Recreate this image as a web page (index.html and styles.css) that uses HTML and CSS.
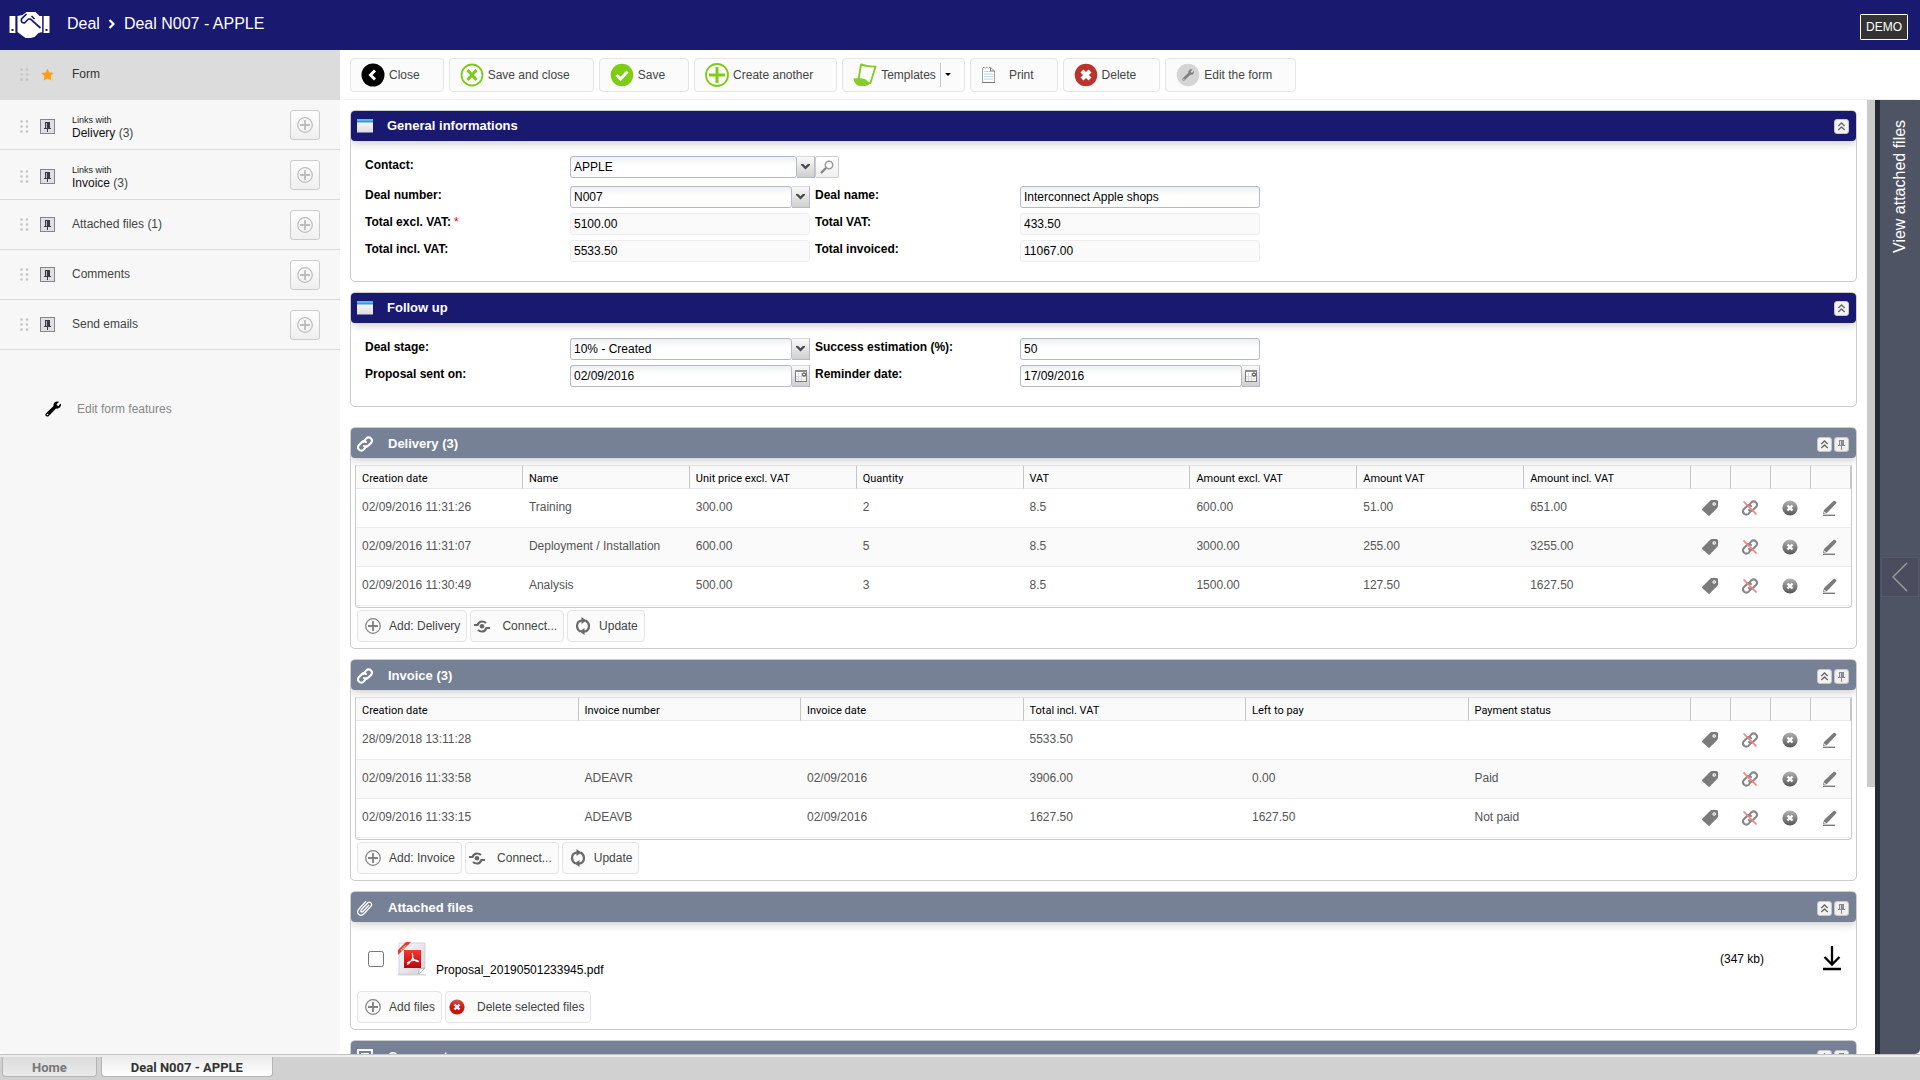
FILE: index.html
```html
<!DOCTYPE html>
<html lang="en">
<head>
<meta charset="utf-8">
<title>Deal N007 - APPLE</title>
<link rel="stylesheet" href="styles.css">
</head>
<body>
<svg class="sprite" aria-hidden="true">
  <defs>
    <linearGradient id="g-grey" x1="0" y1="0" x2="0" y2="1"><stop offset="0" stop-color="#b4b4b4"/><stop offset="1" stop-color="#555"/></linearGradient>
    <linearGradient id="g-red" x1="0" y1="0" x2="0" y2="1"><stop offset="0" stop-color="#d4524c"/><stop offset=".5" stop-color="#cf1a12"/><stop offset="1" stop-color="#c80d06"/></linearGradient>
    <linearGradient id="g-win" x1="0" y1="0" x2="0" y2="1"><stop offset="0" stop-color="#fff"/><stop offset="1" stop-color="#dcdcdc"/></linearGradient>
    <linearGradient id="g-pdf" x1="0" y1="0" x2="0" y2="1"><stop offset="0" stop-color="#f5392b"/><stop offset="1" stop-color="#bd0011"/></linearGradient>
    <linearGradient id="g-page" x1="0" y1="0" x2="1" y2="1"><stop offset="0" stop-color="#fafafc"/><stop offset="1" stop-color="#d2d3dc"/></linearGradient>
  </defs>
  <symbol id="i-grip" viewBox="0 0 9 13"><g fill="#c4c4c4"><circle cx="1.500" cy="1.500" r="1.300"/><circle cx="7" cy="1.500" r="1.300"/><circle cx="1.500" cy="6.500" r="1.300"/><circle cx="7" cy="6.500" r="1.300"/><circle cx="1.500" cy="11.500" r="1.300"/><circle cx="7" cy="11.500" r="1.300"/></g></symbol>
  <symbol id="i-pinbox" viewBox="0 0 15 15"><rect x=".5" y=".5" width="14" height="14" fill="#dfe0e2" stroke="#85868b"/><path d="M5 3h5v6h1v1H8v3H7v-3H4V9h1z" fill="#393a44"/><path d="M6 4h1v5H6z" fill="#b9bac0"/></symbol>
  <symbol id="i-plus" viewBox="0 0 16 16"><circle cx="8" cy="8" r="7.300" fill="none" stroke="currentColor" stroke-width="1.200"/><path d="M8 3v10M3 8h10" stroke="currentColor" stroke-width="1.800"/></symbol>
  <symbol id="i-window" viewBox="0 0 16 13"><rect width="16" height="13" fill="url(#g-win)"/><rect width="16" height="3" fill="#2e9be0"/><path d="M0 .5h16" stroke="#86cdf5"/></symbol>
  <symbol id="i-chain" viewBox="0 0 16 16"><g fill="none" stroke="currentColor" stroke-width="2.100" stroke-linecap="round"><path d="M6.300 6.200l3-3.800a3.200 3.200 0 0 1 4.700 0a3.200 3.200 0 0 1 0 4.500l-2.800 2.900a3.200 3.200 0 0 1-4.200.2"/><path d="M9.700 9.800l-3 3.800a3.200 3.200 0 0 1-4.700 0a3.200 3.200 0 0 1 0-4.500l2.800-2.900a3.200 3.200 0 0 1 4.200-.2"/></g></symbol>
  <symbol id="i-up" viewBox="0 0 15 15"><rect x=".5" y=".5" width="14" height="14" rx="2.500" fill="#f4f4f4" stroke="#c9c5c5"/><path d="M4.300 7l3.200-3 3.200 3M4.300 11l3.200-3 3.200 3" fill="none" stroke="#666" stroke-width="1.300"/></symbol>
  <symbol id="i-pinned" viewBox="0 0 15 15"><rect x=".5" y=".5" width="14" height="14" rx="2.500" fill="#f0f0f0" stroke="#c9c5c5"/><path d="M5 3h5v5h1v1H8v4H7V9H4V8h1z" fill="#8b8b8b"/><path d="M6 4h1v4H6z" fill="#ddd"/></symbol>
  <symbol id="i-tag" viewBox="0 0 16 16"><path d="M.3 8.700L8.200.7Q8.800 0 10 0h4.500Q16 0 16 1.500V6q0 1.200-.8 2L8 15.300q-1 1-2 0L.4 10.200q-.7-.7-.1-1.500z" fill="#7b7b7b"/><circle cx="12.200" cy="4" r="1.800" fill="#fff"/><circle cx="12.200" cy="4" r=".8" fill="#999"/></symbol>
  <symbol id="i-unlink" viewBox="0 0 16 16"><g color="#878787"><use href="#i-chain"/></g><path d="M1.500 1.500l13 13" stroke="#ff7c7c" stroke-width="1.700"/></symbol>
  <symbol id="i-cross" viewBox="0 0 16 16"><circle cx="8" cy="8" r="7.600"/><path d="M5.500 5.500l5 5M10.500 5.500l-5 5" stroke="#fff" stroke-width="2.400"/></symbol>
  <symbol id="i-pencil" viewBox="0 0 16 16"><path d="M2 10L11.500 1q.8-.7 1.600 0l1 1q.8.800 0 1.600L5 13l-4 1z" fill="#7b7b7b"/><path d="M2.300 11.500l1.600 1.200-1.700.5z" fill="#fff"/><path d="M1 15.300h12" stroke="#7b7b7b" stroke-width="1.400"/></symbol>
  <symbol id="i-connect" viewBox="0 0 16 16"><g fill="none" stroke="#666" stroke-width="2.200"><path d="M0 7h3.500Q5 3.500 8 3.500q2.500 0 4 1.500"/><path d="M16 10h-3.500Q11 13.500 8 13.500q-2.500 0-4-1.500"/></g><circle cx="8" cy="8.300" r="2.300" fill="#666"/></symbol>
  <symbol id="i-refresh" viewBox="0 0 16 18"><g fill="none" stroke="#6a6a6a" stroke-width="2.200"><path d="M5.500 14.500Q2 12.500 2 9Q2 3.800 7.500 3.300"/><path d="M10.500 3.500Q14 5.500 14 9Q14 14.200 8.500 14.700"/></g><path d="M6.500 0l5 3.500-5 3.500zM9.500 18l-5-3.500 5-3.500z" fill="#6a6a6a"/></symbol>
  <symbol id="i-wrench" viewBox="0 0 16 16"><path d="M14.200.8L11.600 3.300l.4 1.300 1.300.4L15.800 2.500Q16.500 5 14.800 6.500T11 7.500L4 14.700Q2.500 16.300 1 15T1.300 12L8.600 5Q8 3.200 9.500 1.500T14.200.8z" fill="currentColor"/><circle cx="2.500" cy="13.500" r=".8" fill="#fff"/></symbol>
  <symbol id="i-chevron" viewBox="0 0 9 6"><path d="M0 0h2.200l2.300 2.300L6.800 0H9v1L4.500 5.600 0 1z" fill="#4a4a4a"/></symbol>
  <symbol id="i-calendar" viewBox="0 0 12 12"><rect x=".5" y=".5" width="11" height="11" fill="#fff" stroke="#7c7c7c"/><path d="M0 1h12" stroke="#8d8d8d" stroke-width="2"/><path d="M3.500 3v8M6.500 3v8M1 6.500h10M1 9h10" stroke="#d8d8d8"/><circle cx="9" cy="4.500" r="1.600" fill="#fff" stroke="#222"/></symbol>
</svg>

<header class="topbar">
  <svg class="logo" viewBox="0 0 40 26"><path d="M0 4h6v17H0zM34 4h6v17h-6z" fill="#fff"/><path d="M8 4l5-1 4-3h9l4 4h3v16l-4 1-4 4-4 1-5 0-8-6H8z" fill="#fff"/><path d="M17 2l-5 5q-1 4 3 4l4-4h2l10 9M25 7l-3-3" fill="none" stroke="#191970" stroke-width="1.700"/><path d="M6.700 4v16M33.300 4v16" stroke="#191970"/><path d="M2 17h2v2H2zM36 17h2v2h-2z" fill="#191970"/></svg>
  <nav class="crumbs" aria-label="Breadcrumb"><a href="#">Deal</a><svg class="crumb-sep" viewBox="0 0 8 10"><path d="M1.500 1l4 4-4 4" fill="none" stroke="#fff" stroke-width="2.200"/></svg><a href="#">Deal N007 - APPLE</a></nav>
  <span class="demo">DEMO</span>
</header>

<div class="workspace">
  <aside class="sidebar">
    <ul class="features">
      <li class="feature feature-active"><svg class="grip"><use href="#i-grip"/></svg><svg class="mark" viewBox="0 0 15 15"><path d="M7.500 1.500l1.800 4 4.500.5-3.300 3 .9 4.500-3.900-2.200-3.900 2.200.9-4.500L1.200 6l4.500-.5z" fill="#ff9c12"/></svg><a class="feature-link" href="#">Form</a></li>
      <li class="feature feature-linked"><svg class="grip"><use href="#i-grip"/></svg><svg class="mark"><use href="#i-pinbox"/></svg><a class="feature-link" href="#"><small>Links with</small><b>Delivery</b> (3)</a><button class="add" aria-label="Add delivery"><svg><use href="#i-plus"/></svg></button></li>
      <li class="feature feature-linked"><svg class="grip"><use href="#i-grip"/></svg><svg class="mark"><use href="#i-pinbox"/></svg><a class="feature-link" href="#"><small>Links with</small><b>Invoice</b> (3)</a><button class="add" aria-label="Add invoice"><svg><use href="#i-plus"/></svg></button></li>
      <li class="feature"><svg class="grip"><use href="#i-grip"/></svg><svg class="mark"><use href="#i-pinbox"/></svg><a class="feature-link" href="#">Attached files (1)</a><button class="add" aria-label="Add file"><svg><use href="#i-plus"/></svg></button></li>
      <li class="feature"><svg class="grip"><use href="#i-grip"/></svg><svg class="mark"><use href="#i-pinbox"/></svg><a class="feature-link" href="#">Comments</a><button class="add" aria-label="Add comment"><svg><use href="#i-plus"/></svg></button></li>
      <li class="feature"><svg class="grip"><use href="#i-grip"/></svg><svg class="mark"><use href="#i-pinbox"/></svg><a class="feature-link" href="#">Send emails</a><button class="add" aria-label="Send an email"><svg><use href="#i-plus"/></svg></button></li>
    </ul>
    <a class="edit-features" href="#"><svg><use href="#i-wrench"/></svg>Edit form features</a>
  </aside>

  <main class="main">
    <div class="toolbar">
      <button class="tool"><svg viewBox="0 0 24 24"><circle cx="12" cy="12" r="11.500" fill="#000"/><path d="M14 7.500L9.500 12l4.500 4.500" fill="none" stroke="#fff" stroke-width="3"/></svg>Close</button>
      <button class="tool"><svg viewBox="0 0 24 24"><circle cx="12" cy="12" r="10.500" fill="#fff" stroke="#7ccb17" stroke-width="1.800"/><path d="M7.500 7l9 10M16.500 7l-9 10" stroke="#7ccb17" stroke-width="3"/></svg>Save and close</button>
      <button class="tool"><svg viewBox="0 0 24 24"><circle cx="12" cy="12" r="11.300" fill="#7dce13"/><path d="M6.500 12l4 4L17.500 8.500" fill="none" stroke="#fff" stroke-width="3"/></svg>Save</button>
      <button class="tool"><svg viewBox="0 0 24 24"><circle cx="12" cy="12" r="11" fill="#fff" stroke="#7dce13" stroke-width="1.800"/><path d="M12 4v16M4 12h16" stroke="#7dce13" stroke-width="3"/></svg>Create another</button>
      <button class="tool tool-menu"><svg viewBox="0 0 24 24"><path d="M8 1.500q7 2.500 14.500 2L17.500 20q-3 .5-5-2.500-3-1-7-1z" fill="#fff" stroke="#86cc28" stroke-width="1.900" stroke-linejoin="round"/><path d="M.5 15.500q6.500-.5 11 .5 2 3 5 4.500-1 2.500-5 2.500H6Q1 21 .5 15.500z" fill="#86cc28"/></svg>Templates<span class="caret"></span></button>
      <button class="tool"><svg viewBox="0 0 24 24"><path d="M1.500 5.500l1.500-1.500 1.500 1.500L6 4l1.500 1.500L9 4l4.500 4v11.500h-12z" fill="#fdfdfd" stroke="#a3a3a3"/><path d="M3 8.500h7M3 11h9M3 13.500h9M3 16h9" stroke="#bfd7e6"/><path d="M9.500 4.500v3.500h4M1 19.500h13" fill="none" stroke="#777"/></svg>Print</button>
      <button class="tool"><svg viewBox="0 0 24 24"><circle cx="12" cy="12" r="11.300" fill="#bb332c"/><path d="M8 8l8 8M16 8l-8 8" stroke="#fff" stroke-width="4.200"/></svg>Delete</button>
      <button class="tool"><svg viewBox="0 0 24 24"><circle cx="12" cy="12" r="11.300" fill="#d5d5d5"/><svg x="6" y="6" width="12" height="12" color="#808080"><use href="#i-wrench"/></svg></svg>Edit the form</button>
    </div>

    <div class="body">
      <div class="scroll">
        <section class="panel">
          <h2 class="panel-head"><svg class="panel-icon"><use href="#i-window"/></svg>General informations<span class="panel-tools"><button aria-label="Collapse"><svg><use href="#i-up"/></svg></button></span></h2>
          <div class="form">
            <label for="contact">Contact:</label>
            <div class="combo combo-wide"><select id="contact"><option>APPLE</option></select><span class="trigger"><svg class="chev"><use href="#i-chevron"/></svg></span><button class="lookup" aria-label="Search contact"><svg viewBox="0 0 14 14"><circle cx="9" cy="5" r="3.700" fill="#fff" stroke="#999" stroke-width="1.500"/><path d="M6 8l-5 5" stroke="#888" stroke-width="2.400"/></svg></button></div>
            <label class="row-start" for="number">Deal number:</label>
            <div class="combo"><select id="number"><option>N007</option></select><span class="trigger"><svg class="chev"><use href="#i-chevron"/></svg></span></div>
            <label for="name">Deal name:</label>
            <input class="field" id="name" value="Interconnect Apple shops">
            <label class="row-start" for="excl">Total excl. VAT:<span class="required">*</span></label>
            <input class="field" id="excl" value="5100.00" readonly>
            <label for="vat">Total VAT:</label>
            <input class="field" id="vat" value="433.50" readonly>
            <label class="row-start" for="incl">Total incl. VAT:</label>
            <input class="field" id="incl" value="5533.50" readonly>
            <label for="invoiced">Total invoiced:</label>
            <input class="field" id="invoiced" value="11067.00" readonly>
          </div>
        </section>

        <section class="panel panel-last-form">
          <h2 class="panel-head"><svg class="panel-icon"><use href="#i-window"/></svg>Follow up<span class="panel-tools"><button aria-label="Collapse"><svg><use href="#i-up"/></svg></button></span></h2>
          <div class="form">
            <label class="row-start" for="stage">Deal stage:</label>
            <div class="combo"><select id="stage"><option>10% - Created</option></select><span class="trigger"><svg class="chev"><use href="#i-chevron"/></svg></span></div>
            <label for="success">Success estimation (%):</label>
            <input class="field" id="success" value="50">
            <label class="row-start" for="sent">Proposal sent on:</label>
            <div class="combo"><input class="field" id="sent" value="02/09/2016"><button class="trigger" aria-label="Pick a date"><svg class="cal"><use href="#i-calendar"/></svg></button></div>
            <label for="reminder">Reminder date:</label>
            <div class="combo"><input class="field" id="reminder" value="17/09/2016"><button class="trigger" aria-label="Pick a date"><svg class="cal"><use href="#i-calendar"/></svg></button></div>
          </div>
        </section>

        <section class="panel">
          <h2 class="panel-head panel-head-grey"><svg class="panel-icon"><use href="#i-chain"/></svg>Delivery (3)<span class="panel-tools"><button aria-label="Collapse"><svg><use href="#i-up"/></svg></button><button aria-label="Unpin"><svg><use href="#i-pinned"/></svg></button></span></h2>
          <div class="grid">
            <table>
              <thead><tr><th>Creation date</th><th>Name</th><th>Unit price excl. VAT</th><th>Quantity</th><th>VAT</th><th>Amount excl. VAT</th><th>Amount VAT</th><th>Amount incl. VAT</th><th class="act"></th><th class="act"></th><th class="act"></th><th class="act"></th></tr></thead>
              <tbody>
                <tr><td>02/09/2016 11:31:26</td><td>Training</td><td>300.00</td><td>2</td><td>8.5</td><td>600.00</td><td>51.00</td><td>651.00</td><td class="act"><button aria-label="Tag"><svg><use href="#i-tag"/></svg></button></td><td class="act"><button aria-label="Unlink"><svg><use href="#i-unlink"/></svg></button></td><td class="act"><button aria-label="Delete"><svg fill="url(#g-grey)"><use href="#i-cross"/></svg></button></td><td class="act"><button aria-label="Edit"><svg><use href="#i-pencil"/></svg></button></td></tr>
                <tr><td>02/09/2016 11:31:07</td><td>Deployment / Installation</td><td>600.00</td><td>5</td><td>8.5</td><td>3000.00</td><td>255.00</td><td>3255.00</td><td class="act"><button aria-label="Tag"><svg><use href="#i-tag"/></svg></button></td><td class="act"><button aria-label="Unlink"><svg><use href="#i-unlink"/></svg></button></td><td class="act"><button aria-label="Delete"><svg fill="url(#g-grey)"><use href="#i-cross"/></svg></button></td><td class="act"><button aria-label="Edit"><svg><use href="#i-pencil"/></svg></button></td></tr>
                <tr><td>02/09/2016 11:30:49</td><td>Analysis</td><td>500.00</td><td>3</td><td>8.5</td><td>1500.00</td><td>127.50</td><td>1627.50</td><td class="act"><button aria-label="Tag"><svg><use href="#i-tag"/></svg></button></td><td class="act"><button aria-label="Unlink"><svg><use href="#i-unlink"/></svg></button></td><td class="act"><button aria-label="Delete"><svg fill="url(#g-grey)"><use href="#i-cross"/></svg></button></td><td class="act"><button aria-label="Edit"><svg><use href="#i-pencil"/></svg></button></td></tr>
              </tbody>
            </table>
          </div>
          <div class="actions">
            <button class="action"><span class="slot"><svg><use href="#i-plus"/></svg></span>Add: Delivery</button>
            <button class="action"><span class="slot slot-start"><svg><use href="#i-connect"/></svg></span>Connect...</button>
            <button class="action"><span class="slot"><svg class="refresh"><use href="#i-refresh"/></svg></span>Update</button>
          </div>
        </section>

        <section class="panel">
          <h2 class="panel-head panel-head-grey"><svg class="panel-icon"><use href="#i-chain"/></svg>Invoice (3)<span class="panel-tools"><button aria-label="Collapse"><svg><use href="#i-up"/></svg></button><button aria-label="Unpin"><svg><use href="#i-pinned"/></svg></button></span></h2>
          <div class="grid">
            <table>
              <thead><tr><th>Creation date</th><th>Invoice number</th><th>Invoice date</th><th>Total incl. VAT</th><th>Left to pay</th><th>Payment status</th><th class="act"></th><th class="act"></th><th class="act"></th><th class="act"></th></tr></thead>
              <tbody>
                <tr><td>28/09/2018 13:11:28</td><td></td><td></td><td>5533.50</td><td></td><td></td><td class="act"><button aria-label="Tag"><svg><use href="#i-tag"/></svg></button></td><td class="act"><button aria-label="Unlink"><svg><use href="#i-unlink"/></svg></button></td><td class="act"><button aria-label="Delete"><svg fill="url(#g-grey)"><use href="#i-cross"/></svg></button></td><td class="act"><button aria-label="Edit"><svg><use href="#i-pencil"/></svg></button></td></tr>
                <tr><td>02/09/2016 11:33:58</td><td>ADEAVR</td><td>02/09/2016</td><td>3906.00</td><td>0.00</td><td>Paid</td><td class="act"><button aria-label="Tag"><svg><use href="#i-tag"/></svg></button></td><td class="act"><button aria-label="Unlink"><svg><use href="#i-unlink"/></svg></button></td><td class="act"><button aria-label="Delete"><svg fill="url(#g-grey)"><use href="#i-cross"/></svg></button></td><td class="act"><button aria-label="Edit"><svg><use href="#i-pencil"/></svg></button></td></tr>
                <tr><td>02/09/2016 11:33:15</td><td>ADEAVB</td><td>02/09/2016</td><td>1627.50</td><td>1627.50</td><td>Not paid</td><td class="act"><button aria-label="Tag"><svg><use href="#i-tag"/></svg></button></td><td class="act"><button aria-label="Unlink"><svg><use href="#i-unlink"/></svg></button></td><td class="act"><button aria-label="Delete"><svg fill="url(#g-grey)"><use href="#i-cross"/></svg></button></td><td class="act"><button aria-label="Edit"><svg><use href="#i-pencil"/></svg></button></td></tr>
              </tbody>
            </table>
          </div>
          <div class="actions">
            <button class="action"><span class="slot"><svg><use href="#i-plus"/></svg></span>Add: Invoice</button>
            <button class="action"><span class="slot slot-start"><svg><use href="#i-connect"/></svg></span>Connect...</button>
            <button class="action"><span class="slot"><svg class="refresh"><use href="#i-refresh"/></svg></span>Update</button>
          </div>
        </section>

        <section class="panel">
          <h2 class="panel-head panel-head-grey"><svg class="panel-icon" viewBox="0 0 16 16"><path d="M12 5l-6 6.500q-1 1-1.800.2t.1-1.900L10.500 3q1.500-1.500 3.200-.2t.3 3.400L7 13.800Q4.500 16.300 2 14.500T1.500 9.500L9 1.300" fill="none" stroke="#fff" stroke-width="1.300"/></svg>Attached files<span class="panel-tools"><button aria-label="Collapse"><svg><use href="#i-up"/></svg></button><button aria-label="Unpin"><svg><use href="#i-pinned"/></svg></button></span></h2>
          <div class="file">
            <input type="checkbox" id="file-1">
            <svg class="pdf" viewBox="0 0 29 34"><path d="M0 32h28v1.500H0z" fill="#d7d7d7"/><path d="M1 1h26v25l-6 6H1z" fill="url(#g-page)" stroke="#cdced6" stroke-width=".8"/><path d="M27 26l-6 6v-5z" fill="#fff" stroke="#aaa" stroke-width=".8"/><rect x="6" y="8" width="17" height="18" fill="url(#g-pdf)"/><path d="M14 11q2 4-1 8-2 3-4 3.500M13 18q5-1 8 1.500M14.500 15q1.500 4 6 5M9 21q3-2.500 7-2.500" fill="none" stroke="#fff" stroke-width="1.100"/><path d="M0 13V8l8-8h5L0 13z" fill="#e53a32"/><path d="M3 8.500l5-5" stroke="#f5a9a3" stroke-width="2" stroke-dasharray="1.500 .7"/></svg>
            <label class="file-name" for="file-1">Proposal_20190501233945.pdf</label>
            <span class="file-size">(347 kb)</span>
            <a class="download" href="#" aria-label="Download"><svg viewBox="0 0 18 25"><path d="M9 0v18M1.500 11L9 18.500l7.500-7.500M0 23h18" fill="none" stroke="#000" stroke-width="2.300"/></svg></a>
          </div>
          <div class="actions">
            <button class="action"><span class="slot"><svg><use href="#i-plus"/></svg></span>Add files</button>
            <button class="action"><span class="slot slot-start"><svg fill="url(#g-red)"><use href="#i-cross"/></svg></span>Delete selected files</button>
          </div>
        </section>

        <section class="panel">
          <h2 class="panel-head panel-head-grey"><svg class="panel-icon" viewBox="0 0 16 16"><path d="M1 1h14v11H9l-4 3v-3H1zM4 5h8M4 8h8" fill="none" stroke="#fff" stroke-width="1.800"/></svg>Comments<span class="panel-tools"><button aria-label="Collapse"><svg><use href="#i-up"/></svg></button><button aria-label="Unpin"><svg><use href="#i-pinned"/></svg></button></span></h2>
        </section>
      </div>
      <div class="track"><div class="thumb"></div></div>
      <aside class="drawer">
        <a class="drawer-title" href="#">View attached files</a>
        <button class="drawer-open" aria-label="Open panel"><svg viewBox="0 0 16 30"><path d="M15 1L1 15l14 14" fill="none" stroke="#9a9a9a" stroke-width="1.500"/></svg></button>
      </aside>
    </div>
  </main>
</div>

<footer class="tabs">
  <a class="tab" href="#">Home</a>
  <a class="tab tab-active" href="#">Deal N007 - APPLE</a>
</footer>
</body>
</html>
```
FILE: styles.css
```css
* { box-sizing: border-box; }

body {
  margin: 0;
  height: 100vh;
  display: flex;
  flex-direction: column;
  overflow: hidden;
  font: 12px/14px "Liberation Sans", Arial, sans-serif;
  color: #000;
  background: #fff;
}

a { color: inherit; text-decoration: none; }
button, input, select { font: inherit; color: inherit; margin: 0; padding: 0; }
svg { display: block; flex: none; }
.sprite { width: 0; height: 0; }

/* Top bar */
.topbar {
  display: flex;
  align-items: center;
  height: 50px;
  flex: none;
  padding: 0 12px 0 9px;
  background: #191970;
  color: #fff;
}
.logo { width: 41px; height: 26px; }
.crumbs {
  display: flex;
  align-items: center;
  gap: 8px;
  margin-left: 17px;
  padding-bottom: 2px;
  font-size: 16px;
  line-height: 20px;
}
.crumb-sep { width: 8px; height: 10px; }
.demo {
  align-self: flex-end;
  margin: 0 0 10px auto;
  padding: 5px;
  border: 1px solid #fff;
  border-radius: 1px;
  background: #333;
}

.workspace { display: flex; flex: 1; min-height: 0; }

/* Sidebar */
.sidebar { width: 340px; flex: none; background: #f7f7f7; border-radius: 0 0 5px 5px; }
.features { list-style: none; margin: 0; padding: 0; }
.feature {
  display: flex;
  align-items: center;
  height: 50px;
  padding: 0 20px;
  border-bottom: 1px solid #d9d9d9;
  color: #444;
}
.feature-active { background: #dcdcdc; color: #333; border-bottom-color: #dcdcdc; }
.grip { width: 9px; height: 13px; }
.mark { width: 15px; height: 15px; margin-left: 11px; }
.feature-link { flex: 1; margin-left: 17px; padding-bottom: 2px; }
.feature-linked .feature-link { padding: 5px 0 0; }
.feature-linked .mark, .feature-linked .grip { margin-top: 3px; }
.feature-link b { font-weight: normal; color: #111; }
.feature-link small { display: block; font-size: 9px; line-height: 11px; color: #222; }
.add {
  display: grid;
  place-items: center;
  width: 30px;
  height: 30px;
  border: 1px solid #ccc;
  border-radius: 3px;
  background: linear-gradient(#fdfdfd, #efefef);
  color: #bcbcbc;
}
.add svg { width: 16px; height: 16px; }
.edit-features {
  display: flex;
  align-items: center;
  gap: 16px;
  padding: 51px 0 0 45px;
  color: #888;
}
.edit-features svg { width: 16px; height: 16px; color: #000; }

/* Toolbar */
.main { display: flex; flex-direction: column; flex: 1; min-width: 0; }
.toolbar {
  display: flex;
  align-items: center;
  gap: 5px;
  height: 50px;
  flex: none;
  padding: 0 10px;
  border-bottom: 1px solid #eee;
  border-radius: 0 0 5px 5px;
}
.tool {
  display: flex;
  align-items: center;
  gap: 4px;
  height: 34px;
  padding: 0 23px 0 10px;
  border: 1px solid #e5e5e5;
  border-radius: 4px;
  background: #fbfbfb;
  color: #444;
  white-space: nowrap;
}
.tool > svg { width: 24px; height: 24px; }
.tool-menu { padding-right: 13px; }
.caret {
  display: flex;
  align-items: center;
  height: 24px;
  padding-left: 4px;
  border-left: 1px solid #c6c6c6;
}
.caret::before { content: ""; border: 3px solid transparent; border-top-color: #000; border-bottom: 0; }

/* Content */
.body { display: flex; flex: 1; min-height: 0; }
.scroll {
  display: flex;
  flex-direction: column;
  gap: 10px;
  flex: 1;
  min-width: 0;
  overflow: hidden;
  padding: 10px;
}
.track { width: 8px; flex: none; }
.thumb { height: 72%; background: #cacaca; }

.panel { flex: none; border: 1px solid #ccc; border-radius: 5px; background: #fff; }
.panel-last-form { margin-bottom: 10px; }
.panel-head {
  display: flex;
  align-items: center;
  height: 30px;
  margin: 0;
  padding: 0 7px 0 6px;
  border-radius: 4px;
  background: #191970;
  box-shadow: 0 2px 10px rgba(0, 0, 0, .22);
  clip-path: inset(0 0 -12px 0);
  color: #fff;
  font-size: 13px;
}
.panel-head-grey { padding-top: 2px; background: #778195; }
.panel-icon { width: 16px; height: 16px; margin-right: 14px; }
.panel-head-grey .panel-icon { margin-right: 15px; }
.panel-tools { display: flex; gap: 2px; margin-left: auto; }
.panel-tools button, .act button { display: block; border: 0; background: none; }
.panel-tools svg { width: 15px; height: 15px; }

/* Form fields */
.form {
  display: grid;
  grid-template-columns: 200px 240px 200px 240px;
  column-gap: 5px;
  row-gap: 5px;
  padding: 15px 14px 19px;
}
.form label { padding-top: 2px; font-weight: bold; }
.row-start { grid-column: 1; }
.required { margin-left: 3px; color: #f00; font-weight: normal; }
.field, select {
  width: 100%;
  min-width: 0;
  height: 22px;
  padding: 0 3px;
  border: 1px solid #b5b8c8;
  border-radius: 3px;
  background: linear-gradient(#eef1f1, #fff 45%);
}
select { appearance: none; }
.field:read-only { border-color: #eee; background: #fafafa; }
.combo { display: flex; }
.combo .field, .combo select { flex: 1; width: auto; }
.combo-wide { width: 269px; margin-bottom: 3px; }
.trigger {
  display: grid;
  place-items: center;
  width: 18px;
  height: 22px;
  flex: none;
  border: 1px solid #b5b8c8;
  border-left: 0;
  border-top-color: #d8d8d8;
  background: linear-gradient(#fafafa, #cfcfcf);
}
.chev { width: 9px; height: 6px; }
.cal { width: 12px; height: 12px; }
.lookup {
  display: grid;
  place-items: center;
  width: 24px;
  height: 22px;
  border: 1px solid #ccc;
  border-radius: 2px;
  background: linear-gradient(#fff, #f0f0f0);
}
.lookup svg { width: 14px; height: 14px; }

/* Data tables */
.grid {
  margin: 7px 4px 2px;
  padding-bottom: 1px;
  border: 1px solid #c9c9c9;
  border-top-color: #e8e8e8;
  border-radius: 0 0 4px 4px;
}
table { width: 100%; table-layout: fixed; border-collapse: separate; border-spacing: 0; }
th {
  height: 23px;
  padding: 3px 6px 0;
  border-right: 1px solid #c5c5c5;
  border-bottom: 1px solid #e8e8e8;
  background: #fafafa;
  font: 11px/14px Roboto, "Liberation Sans", sans-serif;
  text-align: left;
}
td { height: 39px; padding: 0 6px 2px; border-bottom: 1px solid #ededed; color: #555; }
tr:nth-child(even) td { background: #fafafa; }
.act { width: 40px; padding: 0 0 0 11px; }
.act svg { width: 16px; height: 16px; }

.actions { display: flex; gap: 3px; padding: 0 6px 6px; }
.action {
  display: flex;
  align-items: center;
  height: 32px;
  padding: 0 6px 0 3px;
  border: 1px solid #e5e5e5;
  border-radius: 4px;
  background: #fbfbfb;
  color: #444;
}
.slot { display: flex; justify-content: center; width: 24px; margin-right: 4px; color: #808080; }
.slot-start { justify-content: flex-start; }
.slot svg { width: 16px; height: 16px; }
.slot .refresh { height: 18px; }

/* Attached file */
.file { display: flex; align-items: center; height: 69px; padding: 4px 15px 0 17px; }
.file input { width: 16px; height: 16px; flex: none; }
.pdf { width: 29px; height: 34px; margin-left: 14px; }
.file-name { margin: 22px auto 0 9px; }
.file-size { margin-right: 59px; }
.download svg { width: 18px; height: 25px; }

/* Side drawer */
.drawer {
  display: flex;
  flex-direction: column;
  align-items: center;
  width: 45px;
  flex: none;
  padding-bottom: 20px;
  border-left: 5px solid #252a34;
  border-radius: 0 0 5px 0;
  background: #4f5464;
  color: #fff;
}
.drawer-title {
  flex: 1;
  padding-bottom: 20px;
  font-size: 16px;
  line-height: 20px;
  writing-mode: vertical-rl;
  transform: rotate(180deg);
  text-align: right;
}
.drawer-open {
  display: grid;
  place-items: center;
  width: 38px;
  height: 40px;
  border: 1px solid #555867;
  background: #4b4d5e;
}
.drawer-open svg { width: 16px; height: 30px; }
.drawer::after { content: ""; flex: 1; }

/* Window tabs */
.tabs {
  display: flex;
  gap: 4px;
  height: 26px;
  flex: none;
  padding: 0 2px 3px;
  border-top: 1px solid #c4c4c4;
  background: #d1d1d1;
  box-shadow: inset 0 2px #ececec;
}
.tab {
  display: flex;
  align-items: center;
  padding: 3px 29px 0;
  margin-top: 2px;
  border: 1px solid #b5b5b5;
  border-top: 0;
  border-radius: 0 0 4px 4px;
  background: linear-gradient(#dcdcdc, #eaeaea);
  color: #777;
  font: bold 13px/16px Roboto, "Liberation Sans", sans-serif;
}
.tab-active { background: linear-gradient(#ececec, #fff); color: #333; }
```
